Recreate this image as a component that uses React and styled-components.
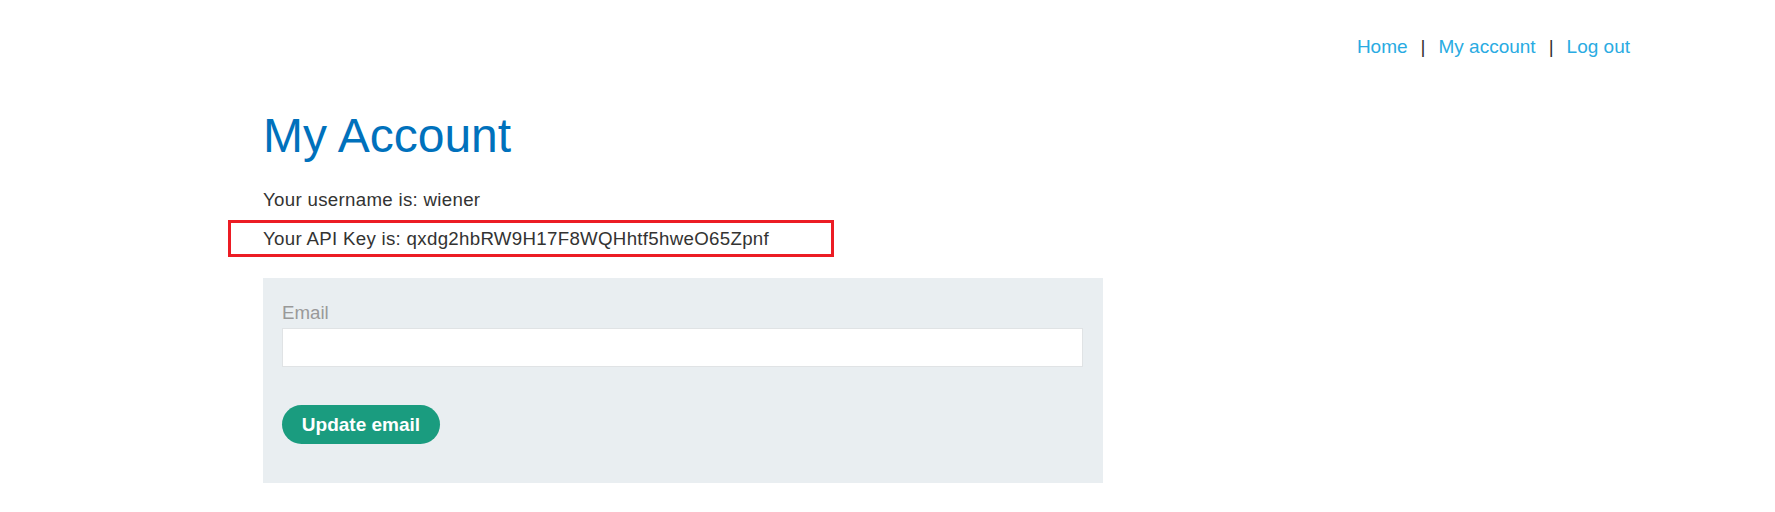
import React from "react";
import styled, { createGlobalStyle } from "styled-components";

const GlobalStyle = createGlobalStyle`
  html, body {
    margin: 0;
    padding: 0;
    background: #ffffff;
  }
  body {
    font-family: "Liberation Sans", Arial, sans-serif;
    color: #333332;
  }
`;

const Page = styled.div`
  width: 1367px;
  margin-left: 263px;
  padding-top: 35px;
  padding-bottom: 29px;
`;

const TopNav = styled.nav`
  display: flex;
  justify-content: flex-end;
  align-items: center;
  font-size: 19px;
  line-height: 23px;
`;

const NavLink = styled.a`
  color: #29abe2;
  text-decoration: none;
  cursor: pointer;
`;

const Divider = styled.span`
  color: #333332;
  margin: 0 13px;
`;

const Title = styled.h1`
  margin: 50px 0 0;
  font-size: 48px;
  line-height: 56px;
  font-weight: normal;
  color: #0071bc;
`;

const Line = styled.p`
  margin: ${(p) => p.$top}px 0 0;
  font-size: 18.7px;
  letter-spacing: 0.3px;
  line-height: 22px;
  position: relative;
  width: max-content;

  ${(p) =>
    p.$marked &&
    `
    &::after {
      content: "";
      position: absolute;
      left: -35px;
      right: -65px;
      top: -8px;
      bottom: -7px;
      border: 3px solid #ec1c24;
      pointer-events: none;
    }
  `}
`;

const Panel = styled.form`
  margin-top: 28px;
  width: 840px;
  box-sizing: border-box;
  padding: 24px 20px 39px 19px;
  background: #e9eef1;
  display: flex;
  flex-direction: column;
  align-items: flex-start;
`;

const Label = styled.label`
  font-size: 18.7px;
  line-height: 22px;
  color: #999999;
`;

const Input = styled.input`
  margin-top: 4px;
  width: 100%;
  height: 39px;
  box-sizing: border-box;
  border: 1px solid #e0e3e5;
  background: #ffffff;
  font: inherit;
  font-size: 18px;
  padding: 0 10px;
  outline: none;
`;

const Button = styled.button`
  margin-top: 38px;
  height: 39px;
  width: 158px;
  border: none;
  border-radius: 20px;
  background: #1a9c7f;
  color: #ffffff;
  font-family: "Liberation Sans", Arial, sans-serif;
  font-weight: bold;
  font-size: 19px;
  padding: 0;
  cursor: pointer;
`;

export default function App() {
  return (
    <>
      <GlobalStyle />
      <Page>
        <TopNav>
          <NavLink>Home</NavLink>
          <Divider>|</Divider>
          <NavLink>My account</NavLink>
          <Divider>|</Divider>
          <NavLink>Log out</NavLink>
        </TopNav>
        <Title>My Account</Title>
        <Line $top={25}>Your username is: wiener</Line>
        <Line $top={17} $marked>
          Your API Key is: qxdg2hbRW9H17F8WQHhtf5hweO65Zpnf
        </Line>
        <Panel onSubmit={(e) => e.preventDefault()}>
          <Label htmlFor="email">Email</Label>
          <Input id="email" type="email" name="email" />
          <Button type="submit">Update email</Button>
        </Panel>
      </Page>
    </>
  );
}
